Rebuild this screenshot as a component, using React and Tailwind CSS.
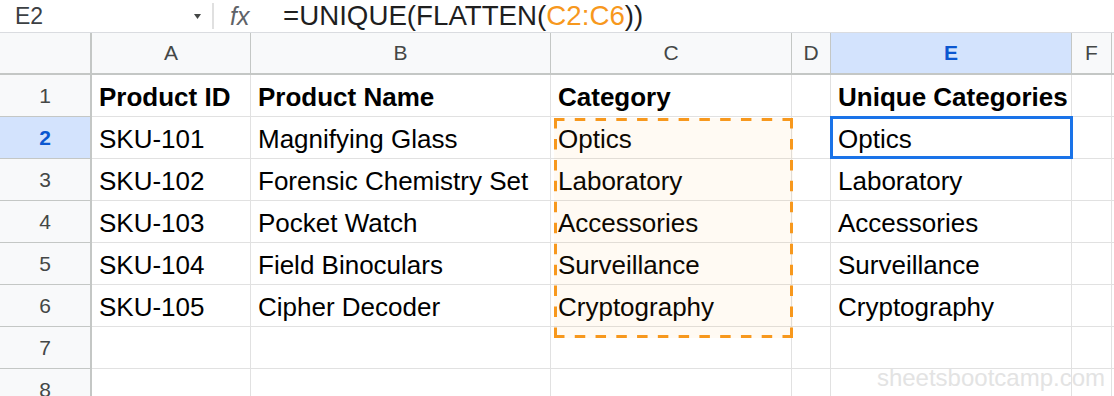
import React from "react";

const rows = [
  ["Product ID", "Product Name", "Category", "", "Unique Categories", ""],
  ["SKU-101", "Magnifying Glass", "Optics", "", "Optics", ""],
  ["SKU-102", "Forensic Chemistry Set", "Laboratory", "", "Laboratory", ""],
  ["SKU-103", "Pocket Watch", "Accessories", "", "Accessories", ""],
  ["SKU-104", "Field Binoculars", "Surveillance", "", "Surveillance", ""],
  ["SKU-105", "Cipher Decoder", "Cryptography", "", "Cryptography", ""],
  ["", "", "", "", "", ""],
  ["", "", "", "", "", ""],
];

const letters = ["A", "B", "C", "D", "E", "F"];

const gridCols = "grid grid-cols-[92px_159px_300px_241px_39px_241px_40px_1fr]";

// marching-ants box around the referenced range
function RangeMarquee() {
  return (
    <div className="absolute left-[554px] top-[85px] w-[239px] h-[220px] bg-[#f7981d]/5 pointer-events-none">
      <svg width="239" height="220" className="absolute inset-0">
        <g stroke="#f7981d" strokeWidth="3" fill="none">
          <line x1="0" y1="1.5" x2="239" y2="1.5" strokeDasharray="10.5 10.27" />
          <line x1="0" y1="218.5" x2="239" y2="218.5" strokeDasharray="10.5 10.27" />
          <line x1="1.5" y1="0" x2="1.5" y2="220" strokeDasharray="10.5 10.45" />
          <line x1="237.5" y1="0" x2="237.5" y2="220" strokeDasharray="10.5 10.45" />
        </g>
      </svg>
    </div>
  );
}

export default function App() {
  return (
    <div className="relative w-[1114px] h-[396px] overflow-hidden bg-white font-['Liberation_Sans',Arial,sans-serif] text-[#000]">
      {/* formula bar */}
      <div className="flex items-center h-[33px] border-b border-[#dadce0]">
        <div className="flex items-center w-[212px] h-full pl-[15px] pr-[11px]">
          <span className="flex-1 text-[23px] leading-none text-[#3c4043]">E2</span>
          <svg width="7" height="5" viewBox="0 0 7 5">
            <path d="M0 0h7L3.5 5z" fill="#444746" />
          </svg>
        </div>
        <div className="w-[2px] h-[26px] bg-[#e0e0e0]" />
        <span className="ml-[16px] w-[53px] text-[25px] leading-none italic text-[#5f6368]">fx</span>
        <span className="text-[27.7px] leading-none text-[#1f1f1f]">
          =UNIQUE(FLATTEN(<span className="text-[#f7981d]">C2:C6</span>))
        </span>
      </div>

      <div className="relative">
        {/* column headers */}
        <div className={`${gridCols} h-[42px] border-b-2 border-[#c4c7c5]`}>
          <div className="bg-[#f8f9fa] border-r-2 border-[#c4c7c5]" />
          {letters.map((l) => (
            <div
              key={l}
              className={
                l === "E"
                  ? "flex items-center justify-center bg-[#d3e3fd] border-r border-[#c4c7c5] text-[21px] font-bold text-[#0b57d0]"
                  : "flex items-center justify-center bg-[#f8f9fa] border-r border-[#c4c7c5] text-[21px] text-[#444746]"
              }
            >
              {l}
            </div>
          ))}
          <div className="bg-[#f8f9fa]" />
        </div>

        {/* rows */}
        {rows.map((r, i) => (
          <div key={i} className={`${gridCols} h-[42px]`}>
            <div
              className={
                i === 1
                  ? "flex items-center justify-center bg-[#d3e3fd] border-r-2 border-b border-[#c4c7c5] text-[21px] font-bold text-[#0b57d0]"
                  : "flex items-center justify-center bg-[#f8f9fa] border-r-2 border-b border-[#c4c7c5] text-[21px] text-[#444746]"
              }
            >
              {i + 1}
            </div>
            {r.map((v, j) => (
              <div
                key={j}
                className={
                  i === 0
                    ? "flex items-center pt-[2px] pl-[7px] pr-[4px] border-r border-b border-[#e1e1e1] text-[26px] leading-[26px] font-bold whitespace-nowrap overflow-hidden"
                    : "flex items-center pt-[2px] pl-[7px] pr-[4px] border-r border-b border-[#e1e1e1] text-[26px] leading-[26px] whitespace-nowrap overflow-hidden"
                }
              >
                {v}
              </div>
            ))}
            <div className="border-b border-[#e1e1e1]" />
          </div>
        ))}

        <RangeMarquee />

        {/* active cell E2 */}
        <div className="absolute left-[830px] top-[83px] w-[243px] h-[43px] border-[3px] border-[#1a73e8] pointer-events-none">
          <div className="absolute right-0 bottom-0 w-[4px] h-[3px] bg-white" />
        </div>
      </div>

      <div className="absolute right-[9px] bottom-[6px] text-[24px] leading-none text-[#e3e3e3]">
        sheetsbootcamp.com
      </div>
    </div>
  );
}
